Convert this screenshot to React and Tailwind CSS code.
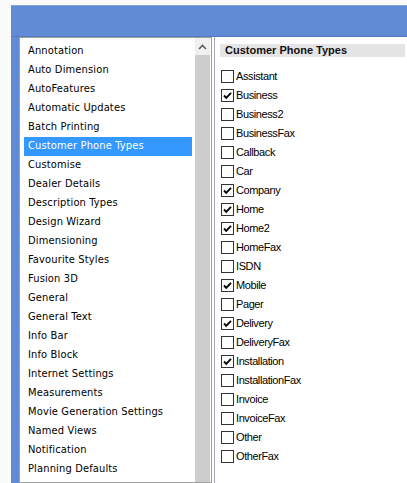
import React from 'react'

const CATS = ['Annotation','Auto Dimension','AutoFeatures','Automatic Updates','Batch Printing','Customer Phone Types','Customise','Dealer Details','Description Types','Design Wizard','Dimensioning','Favourite Styles','Fusion 3D','General','General Text','Info Bar','Info Block','Internet Settings','Measurements','Movie Generation Settings','Named Views','Notification','Planning Defaults']

const TYPES = [
  ['Assistant',0],['Business',1],['Business2',0],['BusinessFax',0],['Callback',0],['Car',0],['Company',1],['Home',1],['Home2',1],['HomeFax',0],['ISDN',0],['Mobile',1],['Pager',0],['Delivery',1],['DeliveryFax',0],['Installation',1],['InstallationFax',0],['Invoice',0],['InvoiceFax',0],['Other',0],['OtherFax',0],
]

function Check({ on }){
  return (
    <span className="w-[13px] h-[13px] border border-[#333] bg-white flex items-center justify-center shrink-0">
      {on ? <svg width="11" height="11" viewBox="0 0 11 11"><path d="M2 5.5 L4.2 7.8 L9 2.8" fill="none" stroke="#000" strokeWidth="1.9"/></svg> : null}
    </span>
  )
}

export default function App(){
  const sel = 'Customer Phone Types'
  return (
    <div className="w-[407px] h-[483px] bg-[#fbfbfb] overflow-hidden pt-[5px] pl-[11px]" style={{fontFamily:'"DejaVu Sans Condensed","DejaVu Sans",sans-serif'}}>
      <div className="h-full bg-[#628bd5] border-t border-[#86a4de] flex flex-col">
        <div className="h-[31px] shrink-0 border-b border-[#5579c0]"/>
        <div className="flex-1 flex pl-[8px] min-h-0">
          <div className="flex-1 flex bg-white min-h-0">
            {/* category list */}
            <div className="w-[193px] flex border border-[#a0a0a0] min-h-0">
              <div className="pl-[4px] pt-[4px] w-[172px] overflow-hidden">
                {CATS.map(c=>(
                  <div key={c} className={`h-[19px] w-[168px] flex items-center pl-[4px] text-[11px] tracking-[0.15px] whitespace-nowrap ${c===sel?'bg-[#3399ff] text-white':'text-black'}`}>{c}</div>
                ))}
              </div>
              <div className="ml-[3px] w-[15px] bg-[#cdcdcd] flex flex-col">
                <div className="h-[17px] bg-[#f0f0f0] flex items-center justify-center">
                  <svg width="9" height="6" viewBox="0 0 9 6"><path d="M1 5 L4.5 1.5 L8 5" fill="none" stroke="#606060" strokeWidth="1.6"/></svg>
                </div>
              </div>
            </div>
            <div className="w-[2px]"/>
            <div className="w-px bg-[#a6a6c4]"/>
            {/* phone types */}
            <div className="flex-1 flex flex-col pl-[5px] pr-[2px] pt-[7px]">
              <div className="h-[13px] bg-[#e5e5e5] flex items-center pl-[5px] text-[11px] font-bold text-[#111]" style={{fontFamily:'"Liberation Sans",Arial,sans-serif'}}>Customer Phone Types</div>
              <div className="mt-[10px] pl-[1px]">
                {TYPES.map(([t,on])=>(
                  <div key={t} className="h-[19px] flex items-center gap-[2px]">
                    <Check on={on}/>
                    <span className="text-[11px] tracking-[-0.4px] text-black" style={{fontFamily:'"Liberation Sans",Arial,sans-serif'}}>{t}</span>
                  </div>
                ))}
              </div>
            </div>
          </div>
        </div>
      </div>
    </div>
  )
}
